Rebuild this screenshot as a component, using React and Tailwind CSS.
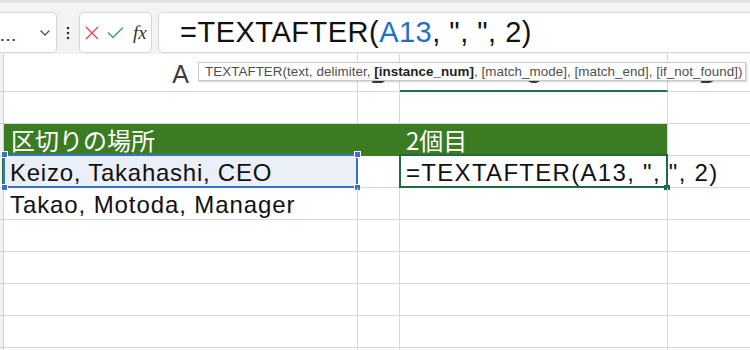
import React from "react";

const rows = [
  { a: "", c: "" },
  { a: "区切りの場所", c: "2個目", green: true },
  { a: "Keizo, Takahashi, CEO", c: "=TEXTAFTER(A13, \", \", 2)", active: true },
  { a: "Takao, Motoda, Manager", c: "" },
  { a: "", c: "" },
  { a: "", c: "" },
  { a: "", c: "" },
  { a: "", c: "" },
  { a: "", c: "" },
];

function Handle({ className }) {
  return <div className={"absolute w-[7px] h-[7px] bg-[#3b72c9] border border-white " + className} />;
}

export default function App() {
  return (
    <div className="relative w-[750px] h-[350px] overflow-hidden bg-white font-['Liberation_Sans',sans-serif]">
      {/* top formula bar */}
      <div className="h-[54px] bg-[#f3f3f3] border-t-[3px] border-[#e2e2e2] flex items-start pt-[9px]">
        <div className="-ml-[14px] w-[71px] h-[41px] bg-white border border-[#d6d6d6] rounded-[5px] flex items-center justify-between pr-[4px]">
          <span className="pl-[12px] text-[18px] text-[#222] leading-none pt-[4px] tracking-[1px]">…</span>
          <svg width="12" height="8" viewBox="0 0 12 8" className="mt-[1px] mr-[1px]">
            <path d="M1.5 1.5 L6 6 L10.5 1.5" fill="none" stroke="#555" strokeWidth="1.3" />
          </svg>
        </div>
        <div className="w-[22px] h-[41px] flex items-center justify-center">
          <svg width="4" height="14" viewBox="0 0 4 14">
            <circle cx="2" cy="2" r="1.3" fill="#333" />
            <circle cx="2" cy="7" r="1.3" fill="#333" />
            <circle cx="2" cy="12" r="1.3" fill="#333" />
          </svg>
        </div>
        <div className="w-[73px] h-[41px] bg-white border border-[#d6d6d6] rounded-[5px] flex items-center pl-[5px] gap-[8px]">
          <svg width="14" height="14" viewBox="0 0 14 14">
            <path d="M1 1 L13 13 M13 1 L1 13" stroke="#e5484d" strokeWidth="1.4" fill="none" />
          </svg>
          <svg width="17" height="13" viewBox="0 0 17 13">
            <path d="M1 6.5 L6 11.5 L16 1.5" stroke="#3f9f52" strokeWidth="1.4" fill="none" />
          </svg>
          <span className="font-['Liberation_Serif',serif] italic text-[19px] text-[#333] leading-none pl-[1px]">fx</span>
        </div>
        <div className="ml-[6px] -mr-[20px] flex-1 h-[41px] bg-white border border-[#d6d6d6] rounded-[5px] flex items-center pl-[21px]">
          <span className="text-[29px] leading-none text-[#111] tracking-[0.5px]">
            =TEXTAFTER(<span className="text-[#1f6fc6]">A13</span>, ", ", 2)
          </span>
        </div>
      </div>

      {/* grid */}
      <div className="grid grid-cols-[4px_354px_42px_268px_1fr]">
        {/* column headers */}
        <div className="h-[38px] bg-[#f3f3f3] border-r border-b border-[#cfcfcf]" />
        <div className="h-[38px] border-r border-b border-[#d9d9d9] flex items-center justify-center text-[25px] text-[#3a3a3a] pt-[4px]">A</div>
        <div className="h-[38px] border-r border-b border-[#d9d9d9] flex items-center justify-center text-[25px] text-[#3a3a3a] pt-[4px]">B</div>
        <div className="h-[38px] border-r border-[#d9d9d9] border-b-2 border-b-[#217346] flex items-center justify-center text-[25px] text-[#3a3a3a] pt-[5px]">C</div>
        <div className="h-[38px] border-b border-[#d9d9d9] flex items-center justify-center text-[25px] text-[#3a3a3a] pt-[4px] pr-[2px]">D</div>

        {rows.map((r, i) => (
          <React.Fragment key={i}>
            <div
              className={
                "h-[32px] bg-[#f3f3f3] border-b border-[#cfcfcf] " +
                (r.active ? "border-r-2 border-r-[#217346]" : "border-r border-r-[#cfcfcf]")
              }
            />
            <div
              className={
                "relative h-[32px] border-r border-b flex items-center pl-[6px] text-[24px] leading-none whitespace-nowrap " +
                (r.green
                  ? "bg-[#3b7b22] border-[#3b7b22] text-white pl-[7px] font-['Noto_Sans_CJK_JP',sans-serif] text-[23px]"
                  : r.active
                  ? "bg-[#ebeff8] border-[#d9d9d9] text-[#111] tracking-[0.75px]"
                  : "border-[#d9d9d9] text-[#111] tracking-[0.9px]")
              }
            >
              <span className={r.green ? "" : "pt-[2px]"}>{r.a}</span>
              {r.active && (
                <>
                  <div className="absolute -top-[2px] -left-[1px] -right-[1px] -bottom-[1px] border-2 border-[#3b72c9]" />
                  <Handle className="-top-[5px] -left-[3px]" />
                  <Handle className="-top-[5px] -right-[4px]" />
                  <Handle className="-bottom-[4px] -left-[3px]" />
                  <Handle className="-bottom-[4px] -right-[4px]" />
                </>
              )}
            </div>
            <div
              className={
                "h-[32px] border-r border-b " +
                (r.green ? "bg-[#3b7b22] border-[#3b7b22]" : "border-[#d9d9d9]")
              }
            />
            <div
              className={
                "relative h-[32px] border-r border-b border-[#d9d9d9] flex items-center pl-[6px] text-[24px] leading-none whitespace-nowrap " +
                (r.green
                  ? "bg-[#3b7b22] text-white font-['Noto_Sans_CJK_JP',sans-serif] text-[23px]"
                  : "text-[#111] tracking-[1.3px]")
              }
            >
              <span className={r.green ? "" : "pt-[2px]"}>{r.c}</span>
              {r.active && (
                <>
                  <div className="absolute -top-[2px] -left-[1px] -right-[1px] -bottom-[1px] border-2 border-[#1f6b40]" />
                  <div className="absolute -bottom-[3px] -right-[3px] w-[6px] h-[5px] bg-[#1f6b40]" />
                </>
              )}
            </div>
            <div className="h-[32px] border-b border-[#d9d9d9]" />
          </React.Fragment>
        ))}
      </div>

      {/* function tooltip */}
      <div className="absolute left-[198px] top-[62px] w-[548px] h-[19px] bg-white border border-[#c8c8c8] shadow-[1px_1px_2px_rgba(0,0,0,0.18)] pl-[6px] text-[13.4px] leading-[17px] text-[#505050] whitespace-pre overflow-hidden tracking-[0.05px]">
        TEXTAFTER(text, delimiter, <b className="text-[#222] font-bold">[instance_num]</b>, [match_mode], [match_end], [if_not_found])
      </div>
    </div>
  );
}
